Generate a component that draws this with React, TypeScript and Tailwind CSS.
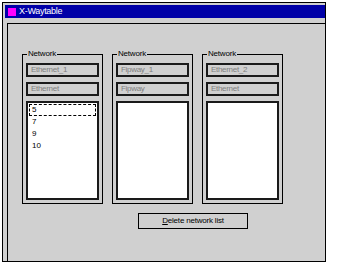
const font = { fontFamily: '"Liberation Sans", Arial, sans-serif' }

interface NetworkGroupProps {
  name: string
  family: string
  items?: string[]
}

function NetworkGroup({ name, family, items = [] }: NetworkGroupProps) {
  return (
    <div className="relative w-[81px] h-[150px] border border-black flex flex-col px-[3px] pt-[8px] pb-[3px]">
      <span className="absolute left-[4px] top-[-6px] bg-[#d0d0d0] px-[1px] text-[8px] leading-[10px] text-black tracking-[-0.2px]">
        Network
      </span>
      <div className="h-[14px] border-2 border-[#1a1a1a] flex items-center pl-[3px] text-[8px] text-[#808080] tracking-[-0.3px]">
        {name}
      </div>
      <div className="h-[14px] mt-[5px] border-2 border-[#1a1a1a] flex items-center pl-[3px] text-[8px] text-[#808080] tracking-[-0.3px]">
        {family}
      </div>
      <div className="flex-1 mt-[5px] border-2 border-[#1a1a1a] bg-white flex flex-col pt-px px-px">
        {items.map((it, i) => (
          <div
            key={it}
            className={
              "h-[12px] flex items-center pl-[2px] text-[8px] text-black " +
              (i === 0 ? "border border-dashed border-black" : "border border-transparent")
            }
          >
            {it}
          </div>
        ))}
      </div>
    </div>
  )
}

export default function App() {
  return (
    <div className="w-[364px] h-[266px] bg-white pt-[2px] pl-[2px]" style={font}>
      <div className="w-[324px] h-[260px] border border-black bg-[#d0d0d0] flex flex-col">
        {/* Title bar */}
        <div className="ml-[2px] mt-[2px] h-[13px] bg-[#0000a8] flex items-center">
          <span className="ml-[3px] w-[8px] h-[8px] bg-[#ff00ff]" />
          <span className="ml-[3px] text-[9px] text-white leading-none tracking-[-0.3px]">X-Waytable</span>
        </div>

        {/* Frame */}
        <div className="flex-1 ml-[4px] mt-[5px] border-l border-t border-black flex flex-col pl-[14px] pt-[30px]">
          <div className="flex gap-[9px]">
            <NetworkGroup name="Ethernet_1" family="Ethernet" items={["5", "7", "9", "10"]} />
            <NetworkGroup name="Fipway_1" family="Fipway" />
            <NetworkGroup name="Ethernet_2" family="Ethernet" />
          </div>
          <button className="ml-[116px] mt-[9px] w-[110px] h-[16px] border border-black flex items-center justify-center text-[8px] text-black tracking-[-0.2px]">
            <span>
              <span className="underline">D</span>elete network list
            </span>
          </button>
        </div>
      </div>
    </div>
  )
}
